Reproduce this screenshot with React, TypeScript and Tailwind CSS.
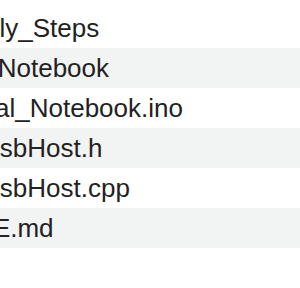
import React from "react";

const rows = [
  { text: "Early_Steps", cls: "ml-[-41px]", gray: false },
  { text: "Digital_Notebook", cls: "ml-[-89px]", gray: true },
  { text: "Digital_Notebook.ino", cls: "ml-[-57px]", gray: false },
  { text: "UsbHost.h", cls: "ml-[-19px]", gray: true },
  { text: "UsbHost.cpp", cls: "ml-[-19px]", gray: false },
  { text: "README.md", cls: "ml-[-101px]", gray: true },
];

export default function App() {
  return (
    <div className="w-[300px] h-[288px] bg-white overflow-hidden pt-2 font-['Liberation_Sans',Arial,sans-serif]">
      {rows.map((r, i) => (
        <div
          key={i}
          className={
            r.gray
              ? "h-10 flex items-center overflow-hidden whitespace-nowrap text-[26px] text-[#222222] bg-[#f2f3f3]"
              : "h-10 flex items-center overflow-hidden whitespace-nowrap text-[26px] text-[#222222] bg-white"
          }
        >
          <span className={r.cls}>{r.text}</span>
        </div>
      ))}
    </div>
  );
}
